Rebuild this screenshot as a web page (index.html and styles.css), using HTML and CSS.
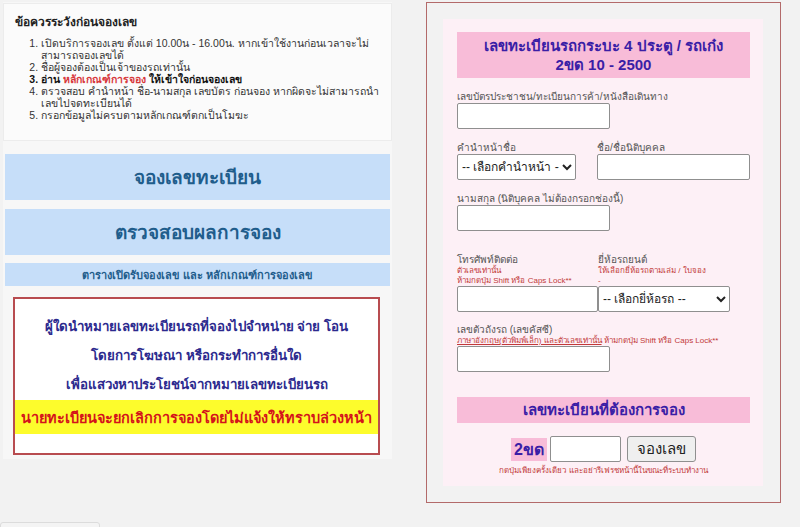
FILE: index.html
```html
<!DOCTYPE html>
<html lang="th">
<head>
<meta charset="utf-8">
<link rel="stylesheet" href="styles.css">
</head>
<body>
<div class="page">
  <div class="left">
    <div class="notice">
      <div class="notice-title">ข้อควรระวังก่อนจองเลข</div>
      <ol class="notice-list">
        <li>เปิดบริการจองเลข ตั้งแต่ 10.00น - 16.00น. หากเข้าใช้งานก่อนเวลาจะไม่สามารถจองเลขได้</li>
        <li>ชื่อผู้จองต้องเป็นเจ้าของรถเท่านั้น</li>
        <li class="strong">อ่าน <span class="red">หลักเกณฑ์การจอง</span> ให้เข้าใจก่อนจองเลข</li>
        <li>ตรวจสอบ คำนำหน้า ชื่อ-นามสกุล เลขบัตร ก่อนจอง หากผิดจะไม่สามารถนำเลขไปจดทะเบียนได้</li>
        <li>กรอกข้อมูลไม่ครบตามหลักเกณฑ์ตกเป็นโมฆะ</li>
      </ol>
    </div>
    <div class="menu-btn big first">จองเลขทะเบียน</div>
    <div class="menu-btn big second">ตรวจสอบผลการจอง</div>
    <div class="menu-btn small">ตารางเปิดรับจองเลข และ หลักเกณฑ์การจองเลข</div>
    <div class="warn">
      <div class="warn-line">ผู้ใดนำหมายเลขทะเบียนรถที่จองไปจำหน่าย จ่าย โอน</div>
      <div class="warn-line">โดยการโฆษณา หรือกระทำการอื่นใด</div>
      <div class="warn-line">เพื่อแสวงหาประโยชน์จากหมายเลขทะเบียนรถ</div>
      <div class="warn-yellow">นายทะเบียนจะยกเลิกการจองโดยไม่แจ้งให้ทราบล่วงหน้า</div>
    </div>
  </div>

  <div class="right">
    <div class="form">
      <div class="pink-head">เลขทะเบียนรถกระบะ 4 ประตู / รถเก๋ง<br>2ขด 10 - 2500</div>

      <div class="field f-id">
        <div class="label">เลขบัตรประชาชน/ทะเบียนการค้า/หนังสือเดินทาง</div>
        <input class="inp w152" type="text">
      </div>

      <div class="row f-name">
        <div class="field col1">
          <div class="label">คำนำหน้าชื่อ</div>
          <select class="sel s-title"><option>-- เลือกคำนำหน้า --</option></select>
        </div>
        <div class="field">
          <div class="label">ชื่อ/ชื่อนิติบุคคล</div>
          <input class="inp w152" type="text">
        </div>
      </div>

      <div class="field f-last">
        <div class="label">นามสกุล (นิติบุคคล ไม่ต้องกรอกช่องนี้)</div>
        <input class="inp w152" type="text">
      </div>

      <div class="row f-phone">
        <div class="field col1">
          <div class="label">โทรศัพท์ติดต่อ</div>
          <div class="hint">ตัวเลขเท่านั้น</div>
          <div class="hint">ห้ามกดปุ่ม Shift หรือ Caps Lock**</div>
          <input class="inp w140" type="text">
        </div>
        <div class="field">
          <div class="label">ยี่ห้อรถยนต์</div>
          <div class="hint">ให้เลือกยี่ห้อรถตามเล่ม / ใบจอง</div>
          <div class="hint">-</div>
          <select class="sel s-brand"><option>-- เลือกยี่ห้อรถ --</option></select>
        </div>
      </div>

      <div class="field f-chassis">
        <div class="label">เลขตัวถังรถ (เลขคัสซี)</div>
        <div class="hint"><u>ภาษาอังกฤษ(ตัวพิมพ์เล็ก) และตัวเลขเท่านั้น</u> ห้ามกดปุ่ม Shift หรือ Caps Lock**</div>
        <input class="inp w152" type="text">
      </div>

      <div class="pink-head second-head">เลขทะเบียนที่ต้องการจอง</div>

      <div class="book-row">
        <span class="prefix">2ขด</span>
        <input class="inp num" type="text">
        <button class="book-btn">จองเลข</button>
      </div>
      <div class="hint center">กดปุ่มเพียงครั้งเดียว และอย่ารีเฟรชหน้านี้ในขณะที่ระบบทำงาน</div>
    </div>
  </div>
</div>
<div class="bottom-tab"></div>
</body>
</html>
```

FILE: styles.css
```css
html, body {
  margin: 0;
  padding: 0;
  background: #f2f2f2;
  font-family: Tahoma, "Liberation Sans", "DejaVu Sans", sans-serif;
  color: #333;
  height: 527px;
  overflow: hidden;
  position: relative;
}

.page {
  display: flex;
  align-items: flex-start;
  padding: 2px 0 0 3px;
}

.left {
  width: 389px;
  background: #f7f7f7;
  padding-bottom: 4px;
  display: flex;
  flex-direction: column;
}

.notice {
  height: 138px;
  box-sizing: border-box;
  background: #fbfbfb;
  border: 1px solid #ececec;
  padding: 8px 10px 0 11px;
  margin-top: 1px;
}

.notice-title {
  font-size: 12px;
  font-weight: bold;
  color: #222;
}

.notice-list {
  margin: 6px 0 0 0;
  padding-left: 26px;
  font-size: 10.5px;
  line-height: 12px;
  color: #333;
}

.notice-list .strong {
  font-weight: bold;
  color: #111;
}

.red {
  color: #d8383c;
}

.menu-btn {
  margin: 0 2px;
  background: #c6def9;
  color: #1f5d8c;
  font-weight: bold;
  text-align: center;
  display: flex;
  align-items: center;
  justify-content: center;
}

.menu-btn.big {
  height: 46px;
  font-size: 19px;
}

.menu-btn.first { margin-top: 13px; }
.menu-btn.second { margin-top: 9px; }

.menu-btn.small {
  margin-top: 8px;
  height: 23px;
  font-size: 11px;
}

.warn {
  margin: 11px 0 0 10px;
  width: 367px;
  height: 158px;
  box-sizing: border-box;
  border: 2px solid #b84c50;
  background: #fff;
  padding-top: 13px;
}

.warn-line {
  text-align: center;
  font-size: 13.3px;
  font-weight: bold;
  color: #2c2a8e;
  line-height: 29px;
  white-space: nowrap;
}

.warn-yellow {
  margin-top: 1px;
  height: 34px;
  background: #fdfc2c;
  color: #d4131b;
  font-size: 14.5px;
  font-weight: bold;
  white-space: nowrap;
  display: flex;
  align-items: center;
  justify-content: center;
}

.right {
  margin-left: 34px;
  width: 355px;
  height: 501px;
  box-sizing: border-box;
  border: 1px solid #b36a6a;
  padding: 16px 17px 16px 16px;
}

.form {
  height: 100%;
  box-sizing: border-box;
  background: #fdf0f6;
  padding: 13px 13px 0 14px;
  display: flex;
  flex-direction: column;
}

.pink-head {
  background: #f8bcd8;
  color: #3a1ea6;
  font-weight: bold;
  font-size: 15px;
  line-height: 19px;
  text-align: center;
  padding: 4px 0;
}

.label {
  font-size: 10px;
  color: #555;
  line-height: 12px;
}

.hint {
  font-size: 8px;
  color: #c23a3a;
  line-height: 10px;
}

.hint.center {
  text-align: center;
  margin-top: 4px;
}

.field {
  display: flex;
  flex-direction: column;
  align-items: flex-start;
}

.row {
  display: flex;
}

.col1 {
  width: 141px;
}

.inp {
  box-sizing: border-box;
  height: 26px;
  border: 1px solid #8f8f8f;
  border-radius: 2px;
  background: #fff;
  margin: 0;
  padding: 0 4px;
}

.w152 { width: 153px; }
.w140 { width: 141px; }

.sel {
  box-sizing: border-box;
  height: 26px;
  border: 1px solid #8f8f8f;
  border-radius: 2px;
  background: #fff;
  font-family: Tahoma, "Liberation Sans", "DejaVu Sans", sans-serif;
  font-size: 12px;
  color: #222;
  margin: 0;
}

.s-title { width: 119px; }
.s-brand { width: 132px; }

.f-id { margin-top: 13px; }
.f-name { margin-top: 13px; }
.f-last { margin-top: 13px; }
.f-phone { margin-top: 23px; }
.f-chassis { margin-top: 12px; }

.second-head {
  margin-top: 25px;
  padding: 3px 0 4px;
}

.book-row {
  margin-top: 13px;
  display: flex;
  justify-content: center;
  align-items: center;
  gap: 3px;
}

.prefix {
  background: #f8bcd8;
  color: #3a1ea6;
  font-weight: bold;
  font-size: 16px;
  height: 23px;
  line-height: 23px;
  padding: 0 3px;
}

.inp.num {
  width: 71px;
  height: 26px;
}

.book-btn {
  margin-left: 3px;
  height: 26px;
  width: 69px;
  border: 1px solid #8f8f8f;
  border-radius: 3px;
  background: #efefef;
  font-family: Tahoma, "Liberation Sans", "DejaVu Sans", sans-serif;
  font-size: 15px;
  color: #222;
  padding: 0;
}

.bottom-tab {
  position: absolute;
  left: 0;
  top: 522px;
  width: 98px;
  height: 10px;
  border: 1px solid #dcdcdc;
  border-radius: 3px;
  background: #f4f4f4;
}
```
